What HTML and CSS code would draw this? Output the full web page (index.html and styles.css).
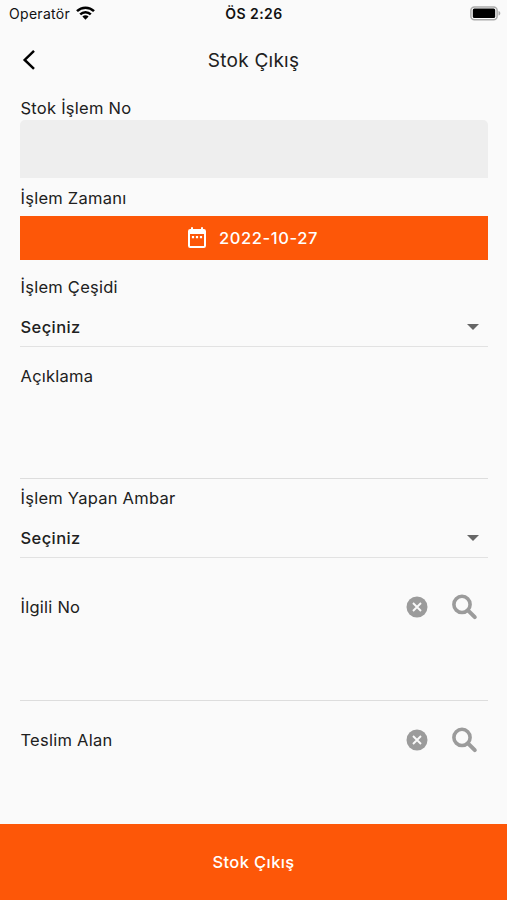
FILE: index.html
```html
<!DOCTYPE html>
<html lang="tr">
<head>
<meta charset="utf-8">
<title>Stok Çıkış</title>
<link rel="stylesheet" href="styles.css">
</head>
<body>
<div class="screen">
  <div class="status">
    <div class="carrier"><span>Operatör</span>
      <svg class="wifi" width="19" height="14" viewBox="0 0 19 14"><g fill="none" stroke="#000" stroke-width="2.5"><path d="M1 5.2a12.2 12.2 0 0 1 17 0"/><path d="M4.2 8.4a7.6 7.6 0 0 1 10.6 0"/></g><path d="M6.4 10.6a4.4 4.4 0 0 1 6.2 0L9.5 13.7z"/></svg>
    </div>
    <div class="clock">ÖS 2:26</div>
    <svg class="battery" width="31" height="15" viewBox="0 0 31 15"><rect x=".9" y=".9" width="26.2" height="12.8" rx="3.5" fill="#fff" stroke="#aaa" stroke-width="1.5"/><rect x="2.8" y="2.6" width="22.4" height="9.4" rx="1.5"/><path d="M28.5 5c2.4.6 2.4 4 0 4.6z" fill="#aaa"/></svg>
  </div>
  <header class="header">
    <svg class="back" width="14" height="20" viewBox="0 0 14 20"><path d="M12 .9 2.700 9.900l9.300 9" fill="none" stroke="#000" stroke-width="2.500"/></svg>
    <h1 class="title">Stok Çıkış</h1>
  </header>
  <main class="form">
    <label class="label first">Stok İşlem No</label>
    <div class="input"></div>
    <label class="label zaman">İşlem Zamanı</label>
    <button class="date">
      <svg width="20" height="22" viewBox="0 0 20 22"><path fill="#fff" fill-rule="evenodd" d="M3.200 2H4V.3h2V2h8V.3h2V2h.8A2.200 2.200 0 0 1 19 4.200v14.600a2.200 2.200 0 0 1-2.200 2.200H3.200A2.200 2.200 0 0 1 1 18.800V4.200A2.200 2.200 0 0 1 3.200 2zM3 7v12h14V7zM4.900 9h2.200v2.200H4.900zm4 0h2.200v2.200H8.900zm4 0h2.200v2.200h-2.200z"/></svg>
      <span>2022-10-27</span>
    </button>
    <label class="label cesit">İşlem Çeşidi</label>
    <div class="select"><span>Seçiniz</span><i class="caret"></i></div>
    <div class="textarea"><label class="label">Açıklama</label></div>
    <label class="label ambar">İşlem Yapan Ambar</label>
    <div class="select"><span>Seçiniz</span><i class="caret"></i></div>
    <div class="lookup">
      <label class="label">İlgili No</label>
      <div class="actions">
        <svg width="22" height="22" viewBox="0 0 22 22"><circle cx="11" cy="11" r="10.500" fill="#9b9b9b"/><path d="m7 7 8 8m0-8-8 8" stroke="#fafafa" stroke-width="1.900"/></svg>
        <svg width="26" height="26" viewBox="0 0 26 26" fill="none" stroke="#9b9b9b" stroke-width="3.600"><circle cx="10" cy="10.400" r="8.100"/><path d="m16 16.300 6.800 6.800" stroke-width="4" stroke-linecap="round"/></svg>
      </div>
    </div>
    <div class="lookup last">
      <label class="label">Teslim Alan</label>
      <div class="actions">
        <svg width="22" height="22" viewBox="0 0 22 22"><circle cx="11" cy="11" r="10.500" fill="#9b9b9b"/><path d="m7 7 8 8m0-8-8 8" stroke="#fafafa" stroke-width="1.900"/></svg>
        <svg width="26" height="26" viewBox="0 0 26 26" fill="none" stroke="#9b9b9b" stroke-width="3.600"><circle cx="10" cy="10.400" r="8.100"/><path d="m16 16.300 6.800 6.800" stroke-width="4" stroke-linecap="round"/></svg>
      </div>
    </div>
  </main>
  <button class="submit">Stok Çıkış</button>
</div>
</body>
</html>
```
FILE: styles.css
```css
* { box-sizing: border-box; }
body { margin: 0; background: #fafafa; color: #202020; font-family: Inter, "Liberation Sans", sans-serif; }
button { border: 0; font: inherit; color: #fff; background: #fd5708; }
svg { display: block; flex: none; }
.screen { height: 900px; display: flex; flex-direction: column; overflow: hidden; }
.status { height: 28px; display: grid; grid-template-columns: 1fr auto 1fr; align-items: center; padding: 0 6px 2px 9px; color: #111; }
.carrier { display: flex; align-items: center; gap: 6px; font-size: 14px; letter-spacing: .3px; }
.wifi { margin-top: -1px; }
.clock { font-size: 14px; font-weight: 600; letter-spacing: .45px; margin-left: -2px; }
.battery { justify-self: end; margin-top: 1px; }
.header { height: 64px; display: grid; grid-template-columns: 60px 1fr 60px; align-items: center; }
.back { margin-left: 22px; }
.title { margin: 1px 0 0; text-align: center; font-size: 19px; font-weight: 400; letter-spacing: .25px; line-height: 24px; }
.form { flex: 1; display: flex; flex-direction: column; padding: 0 19px 0 20px; }
.label { display: block; font-size: 16.5px; line-height: 24px; letter-spacing: .25px; padding-left: .5px; }
.first { margin-top: 4px; height: 24px; }
.input { height: 58px; background: #eee; border-radius: 5px 5px 0 0; }
.zaman { margin: 8px 0 6px; }
.date { height: 44px; padding: 0 3px 0 0; display: flex; align-items: center; justify-content: center; gap: 12px; font-size: 16.5px; font-weight: 500; letter-spacing: .6px; }
.cesit { margin-top: 15px; }
.select { height: 48px; border-bottom: 1px solid #e2e2e2; display: flex; align-items: center; justify-content: space-between; padding: 8px 9px 0 .5px; font-size: 16.5px; font-weight: 550; letter-spacing: .4px; }
.caret { border: 6px solid transparent; border-top-color: #666; border-bottom: 0; }
.textarea { height: 132px; padding-top: 17px; border-bottom: 1px solid #ddd; }
.ambar { margin-top: 7px; }
.lookup { height: 143px; border-bottom: 1px solid #ddd; padding-top: 36px; display: flex; align-items: flex-start; justify-content: space-between; }
.lookup.last { height: 122px; padding-top: 26px; border: 0; }
.lookup .label { margin-top: 1px; }
.actions { display: flex; align-items: center; gap: 24px; padding-right: 10px; }
.submit { height: 76px; padding: 0; flex: none; font-size: 16.5px; font-weight: 500; letter-spacing: .4px; }
```
